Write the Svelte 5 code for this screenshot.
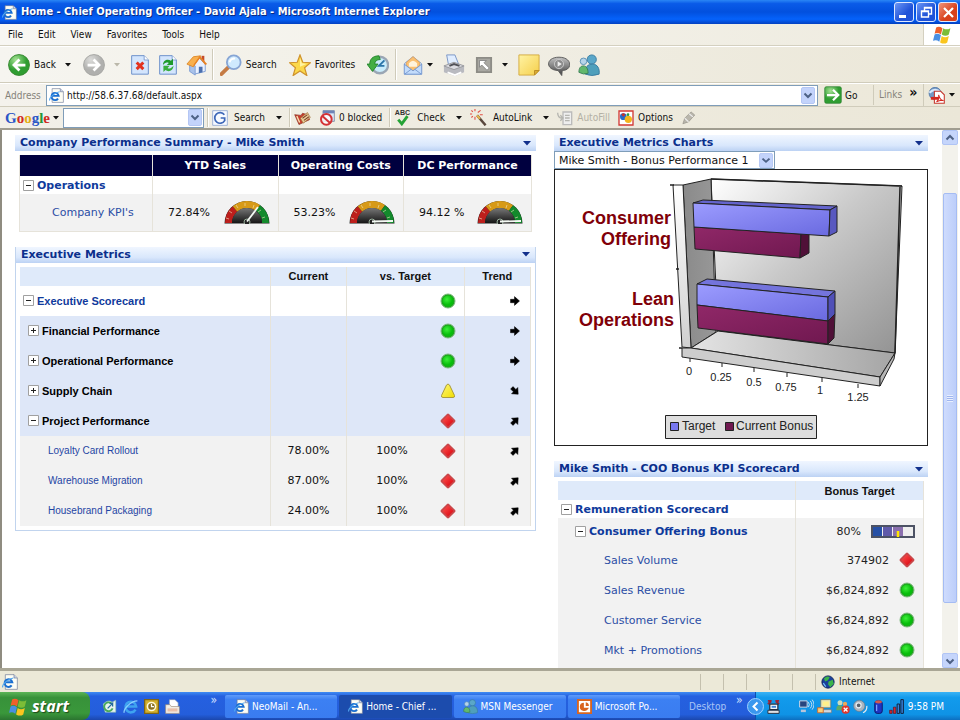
<script>
  const menus = ['File', 'Edit', 'View', 'Favorites', 'Tools', 'Help'];
  const gauges = [
    { label: 'YTD Sales', value: '72.84%', x: 34, y: 7 },
    { label: 'Operating Costs', value: '53.23%', x: 44, y: 21 },
    { label: 'DC Performance', value: '94.12 %', x: 44, y: 21 }
  ];
  const metrics = [
    { name: 'Executive Scorecard', kind: 'root', open: true, status: 'green', trend: 0 },
    { name: 'Financial Performance', kind: 'group', open: false, status: 'green', trend: 0 },
    { name: 'Operational Performance', kind: 'group', open: false, status: 'green', trend: 0 },
    { name: 'Supply Chain', kind: 'group', open: false, status: 'yellow', trend: 45 },
    { name: 'Project Performance', kind: 'group', open: true, status: 'red', trend: -45 },
    { name: 'Loyalty Card Rollout', kind: 'leaf', current: '78.00%', target: '100%', status: 'red', trend: -45 },
    { name: 'Warehouse Migration', kind: 'leaf', current: '87.00%', target: '100%', status: 'red', trend: -45 },
    { name: 'Housebrand Packaging', kind: 'leaf', current: '24.00%', target: '100%', status: 'red', trend: -45 }
  ];
  const bonus = [
    { name: 'Sales Volume', value: '374902', status: 'red' },
    { name: 'Sales Revenue', value: '$6,824,892', status: 'green' },
    { name: 'Customer Service', value: '$6,824,892', status: 'green' },
    { name: 'Mkt + Promotions', value: '$6,824,892', status: 'green' }
  ];
  const ticks = [
    ['0', 690, 358, 689, 375], ['0.25', 722, 363, 721, 381], ['0.5', 754, 368, 754, 386],
    ['0.75', 787, 373, 786, 391], ['1', 822, 378, 820, 394], ['1.25', 858, 384, 858, 401]
  ];
  const tasks = [
    { icon: 'page', name: 'NeoMail - An...' },
    { icon: 'page', name: 'Home - Chief ...', active: true },
    { icon: 'people', name: 'MSN Messenger' },
    { icon: 'ppt', name: 'Microsoft Po...' }
  ];
</script>

{#snippet caret(dim)}
  <svg class="caret" class:dim width="6" height="4" viewBox="0 0 6 4" aria-hidden="true"><path d="M0 0h6L3 3.6z" fill="currentColor" /></svg>
{/snippet}

{#snippet chevron(w, h)}
  <svg class="chev" width={w} height={h} viewBox="0 0 14 17" preserveAspectRatio="none" aria-hidden="true">
    <rect x=".5" y=".5" width="13" height="16" rx="1.5" fill="#c3d3fb" stroke="#b4c6f4" />
    <path d="M3.5 6.5 7 10l3.5-3.5" fill="none" stroke="#4d6185" stroke-width="2" />
  </svg>
{/snippet}

{#snippet icon(name, size)}
  <svg class="icon" width={size} height={size} viewBox="0 0 24 24" aria-hidden="true">
    {#if name === 'page'}
      <path d="M5 1h13l5 5v17H5z" fill="#fdfdf4" stroke="#6d7896" /><path d="M18 1v5h5" fill="#c9d4ea" stroke="#6d7896" />
      <path d="M14.500 17a5.800 5.800 0 1 1 1-4.500H4.500" fill="none" stroke="#1b6fd0" stroke-width="3" />
      <path d="M1 20c-1-4 8-13 16-14" fill="none" stroke="#52a6ee" stroke-width="1.8" />
    {:else if name === 'ie'}
      <path d="M20 17a8.5 8.5 0 1 1 1-5H6" fill="none" stroke="#3fa4f0" stroke-width="4" />
      <path d="M2 22c-2-5 10-19 21-19" fill="none" stroke="#8bd0ff" stroke-width="2" />
    {:else if name === 'back'}
      <circle cx="12" cy="12" r="11.4" fill="url(#gBack)" stroke="#36872f" /><path d="M19 12H7m5.5-6L6.5 12l6 6" fill="none" stroke="#fff" stroke-width="3" />
    {:else if name === 'forward'}
      <circle cx="12" cy="12" r="11.4" fill="url(#gFwd)" stroke="#a5a5a2" /><path d="M5 12h12m-5.500-6 6 6-6 6" fill="none" stroke="#fff" stroke-width="3" />
    {:else if name === 'stop' || name === 'refresh'}
      <path d="M2 .8h15L22 6v17H2z" fill="#d3e5fd" stroke="#6f92cb" stroke-width="1.2" /><path d="M17 .8V6h5" fill="#fff" stroke="#6f92cb" />
      {#if name === 'stop'}
        <path d="m8 9 8 8m0-8-8 8" stroke="#e3321f" stroke-width="3.6" />
      {:else}
        <path d="M6 12c0-6 6-8 9.500-5L18 4.500V12h-7.500L13 9.500c-3-1.500-5 0-7 2.500z" fill="#1e9a2b" /><path d="M18.500 13c0 6-6 8-9.500 5l-2.500 2.500V13H14l-2.500 2.500c3 1.500 5 0 7-2.500z" fill="#38ad3d" />
      {/if}
    {:else if name === 'home'}
      <path d="M17 2h3v7h-3z" fill="#c44c29" /><path d="m4 12 5 10 12-3v-8l-7-7z" fill="#e9f1ff" stroke="#7d9cd2" /><path d="M4 12v7l6 4V13z" fill="#a9c2ea" stroke="#7d9cd2" />
      <path d="M1 11 8 3l8-1-7 10-1 2z" fill="#f9b04d" stroke="#dd8a2c" /><path d="m15 2 8 9-2 1-6-7-6 8-1-1z" fill="#e88324" /><path d="M14 14h4v6l-4 1z" fill="#4a6fae" />
    {:else if name === 'search'}
      <path d="m1.500 22 8-8" stroke="#c57b44" stroke-width="4" stroke-linecap="round" /><circle cx="15" cy="9" r="7.500" fill="#cfeafe" stroke="#87a5d4" stroke-width="2" /><path d="M10.500 9a5 5 0 0 1 6-4" fill="none" stroke="#fff" stroke-width="2" />
    {:else if name === 'star'}
      <path d="m12 1 3 8 8.500.5L17 15l2.500 8.500L12 18.500l-7.500 5L7 15 .5 9.500 9 9z" fill="#fbd84a" stroke="#cf922b" stroke-width="1.300" /><path d="m12 4 2 6 5 .8-7 3z" fill="#fff3a3" />
    {:else if name === 'history'}
      <circle cx="14" cy="12" r="9" fill="#c9ecfb" stroke="#9aa6b4" stroke-width="2.500" /><path d="m19 7-6 6h6" fill="none" stroke="#2c75a9" stroke-width="2" /><path d="M13 2C6 2 3 6 3 11H0l6 8 6-8H8.500c0-3 2-5 6-5z" fill="#43ae43" stroke="#22822a" />
    {:else if name === 'mail'}
      <path d="m2 10 10-8 10 8v13H2z" fill="#d9e9fc" stroke="#7697c9" /><path d="m4 9 8-7 8 7v4l-8 6-8-6z" fill="#fbc070" stroke="#e2a055" /><path d="M7 10q5-6 10 0v4H7z" fill="#fff3dc" /><path d="m1.500 11 10.500 8 10.500-8v12h-21z" fill="#c3dcfb" stroke="#6f93cc" /><path d="m2 23 8-6m12 6-8-6" stroke="#6f93cc" />
    {:else if name === 'print'}
      <path d="m6 12-2-11h9l4 10z" fill="#e0edff" stroke="#7592c4" /><path d="m1 13 11-4 11 4v7l-10 4L1 20z" fill="#b9bac0" /><path d="m1 13 11 4 11-4-11-4z" fill="#dcdce2" stroke="#97989d" /><path d="m5 20 8 3 7-3" stroke="#fff" fill="none" stroke-width="2" /><path d="m7 13 5-2 6 2" stroke="#505157" fill="none" stroke-width="2" />
    {:else if name === 'fit'}
      <path d="M2.500 2.500h19v19h-19z" fill="#a9a8a2" stroke="#8d8c86" stroke-width="2.500" /><path d="M6 6h9l-3 3 7 7-3 3-7-7-3 3z" fill="#fff" stroke="#777" />
    {:else if name === 'note'}
      <path d="M1 1h22v17l-5 5H1z" fill="url(#gNote)" stroke="#d2a93c" /><path d="M23 18h-5v5z" fill="#d9ac35" stroke="#b98a24" />
    {:else if name === 'talk'}
      <path d="M12 3.500c15 0 15 14.500 3.500 14.500L15 23.500 11 18C-3 17.500-3 3.500 12 3.500z" fill="url(#gTalk)" stroke="#555" /><circle cx="12" cy="11" r="5" fill="#8b8b8b" stroke="#ccc" /><path d="M10.500 8v6l4.500-3z" fill="#eee" />
    {:else if name === 'people'}
      <circle cx="15" cy="6" r="5" fill="#5aa7c9" stroke="#387ba0" /><path d="M8 22c-1-8 3-11 8-11s8 5 7 11q-8 3-15 0z" fill="#4f9fbb" stroke="#387ba0" /><circle cx="6" cy="8" r="3.600" fill="#b6d4e9" stroke="#5b8fb3" /><path d="M1 20c0-5 2-7 5-7s5 3 5 8q-5 2-10-1z" fill="#62b86d" stroke="#397f56" />
    {:else if name === 'flag'}
      <path d="M4 3q4-2 8 1l-2 8q-4-3-8-1z" fill="#f0602a" /><path d="M13 4q4 3 9 0l-2 8q-4 3-9 0z" fill="#7cbd37" /><path d="M2 12q4-2 8 1l-2 8q-4-3-8-1z" fill="#4a8fe2" /><path d="M11 14q4 3 9 0l-2 8q-4 3-9 0z" fill="#fac51f" />
    {:else if name === 'go'}
      <rect x="1" y="1" width="22" height="22" rx="2" fill="url(#gBack)" stroke="#2b8030" /><path d="M4 12h14m-6-7 7 7-7 7" fill="none" stroke="#fff" stroke-width="3" />
    {:else if name === 'pdf'}
      <circle cx="10" cy="9" r="8.500" fill="#7398c5" stroke="#446da2" /><path d="M2 8q8-8 16 0" stroke="#d8e9fc" stroke-width="3" fill="none" /><path d="M9 6h9l5 5v12H9z" fill="#fff" stroke="#c5382e" stroke-width="1.500" /><path d="M4 14h11v4H4z" fill="#d5271f" /><path d="M12 21q4-4 3-10 2 8 7 8-5-1-10 2" fill="none" stroke="#d5271f" stroke-width="1.500" />
    {:else if name === 'gsearch'}
      <path d="M1 1h22v22H1z" fill="#f7faff" stroke="#7896cb" /><path d="M18.500 7a8 8 0 1 0 .5 9v-4h-6" fill="none" stroke="#3e68b8" stroke-width="2.600" />
    {:else if name === 'news'}
      <path d="m1 8 6 14 15-7-3-7-7-2-2 3z" fill="#c63a2c" stroke="#8d3a2a" /><path d="m9 13 10-8 4 7-10 8z" fill="#e9cf9a" stroke="#a0703a" /><path d="m12 13 7-5m-5 8 7-5" stroke="#7f3e2a" stroke-width="1.500" /><path d="m4 10 4 9" stroke="#f8e4b4" stroke-width="2" />
    {:else if name === 'block'}
      <path d="M6 1h17v16H6z" fill="#dce8f8" stroke="#586b92" /><path d="M6 1h17v4H6z" fill="#6d83b7" /><circle cx="11" cy="14" r="8" fill="#fff" fill-opacity=".8" stroke="#d33236" stroke-width="3" /><path d="m5 9 12 11" stroke="#d33236" stroke-width="3" />
    {:else if name === 'abc'}
      <text x="12" y="9" text-anchor="middle" font-family="Liberation Sans, sans-serif" font-weight="700" font-size="10" fill="#333">ABC</text><path d="m6 15 5 6 8-11" fill="none" stroke="#24a336" stroke-width="4" />
    {:else if name === 'wand'}
      <path d="m10 9 12 14" stroke="#59473d" stroke-width="3.400" /><path d="m10 9 4 5" stroke="#e7b64f" stroke-width="3" /><path d="M7 0v3m0 8v4M0 7h3m8-2 4-3M2 2l2 2m-2 8 2-2m10-2h4" stroke="#e14d41" stroke-width="1.500" />
    {:else if name === 'fill'}
      <path d="M9 3h13v19H9z" fill="#eee" stroke="#bbb" stroke-width="2" /><path d="M12 8h7m-7 4h7m-7 4h7M1 4q0 8 7 8m-3-4 4 4-4 4" stroke="#b5b5b0" stroke-width="2" fill="none" />
    {:else if name === 'options'}
      <path d="M1.500 1.500h21v21h-21z" fill="#fff" stroke="#d33a35" stroke-width="2" /><circle cx="8" cy="10" r="5" fill="#256cc9" /><circle cx="15.500" cy="14" r="5.500" fill="#f3b51d" /><path d="M5 7q3-4 6 0l-3 3z" fill="#c5322b" /><circle cx="15" cy="7" r="2" fill="#2a9b40" />
    {:else if name === 'pen'}
      <path d="m3 22 3-9L16 3l6 5-10 11z" fill="#b9b6ac" stroke="#8e8b83" /><path d="m6 13 6 6M13 6l6 5" stroke="#eee" stroke-width="2" />
    {:else if name === 'globe'}
      <circle cx="12" cy="12" r="10.500" fill="#1a3f9c" stroke="#0c1e55" stroke-width="1.500" /><path d="M5 6q6-6 10-2l-3 5-5 2zM13 11l7-3 2 7-6 6-4-5z" fill="#3cb44a" /><path d="M4 14l4 6" stroke="#77c8ff" stroke-width="2" />
    {:else if name === 'desktop'}
      <path d="M2 8q8-8 14-3l6-3v19H5z" fill="#e6f4ee" stroke="#8fbfb0" /><path d="M17 15a7 7 0 1 1-2-8" fill="none" stroke="#49a95a" stroke-width="3" /><path d="m9 15 8-8v5m0-5h-5" stroke="#246c9d" stroke-width="2" fill="none" />
    {:else if name === 'clock'}
      <path d="M1 1h22v22H1z" fill="#d3b12e" stroke="#7e6416" stroke-width="2" /><circle cx="12" cy="12" r="6.500" fill="#8a7020" stroke="#fff9d8" stroke-width="2.500" /><path d="M12 8v4h4" stroke="#fff" stroke-width="2" fill="none" />
    {:else if name === 'folder'}
      <path d="M7 1h9l5 5v12H7z" fill="#fff" stroke="#8c97ab" /><path d="M1 9h7l2 3h13v11H1z" fill="#f1ede4" stroke="#9c8877" /><path d="M4 15h16v5H4z" fill="#e9bfa8" />
    {:else if name === 'ppt'}
      <path d="M1.500 1.500h21v21h-21z" fill="#fff" stroke="#d9651f" stroke-width="3" /><path d="M11 6v8h8a8 8 0 0 1-8 5 6.500 6.500 0 0 1 0-13zM14 5a6 6 0 0 1 5 6h-5z" fill="#d9651f" />
    {:else if name === 'modem'}
      <path d="M3 3h6m6 0h6M3 8l5-4m13 4-5-4" stroke="#a02636" stroke-width="3" /><path d="M6 8h13v9H6z" fill="#eef4fa" stroke="#26303f" stroke-width="2" /><path d="M3 18h18v5H3z" fill="#dfe2e6" stroke="#26303f" stroke-width="1.500" /><path d="M9 11h7v3H9z" fill="#3b82d6" />
    {:else if name === 'net'}
      <path d="M1 3h12v10H1z" fill="#27457f" stroke="#d4dceb" stroke-width="1.500" /><path d="M3 17h8v4H3z" fill="#b9c5da" /><path d="M15 5q3 4 0 8m3-10q5 6 0 12m3-14q6 8 0 16" fill="none" stroke="#cfe2f4" stroke-width="1.500" />
    {:else if name === 'monitor'}
      <path d="M6 1h16v13H6z" fill="#e8e4b8" stroke="#6e6b4f" /><path d="M9 4h10v7H9z" fill="#fff08a" /><path d="M9 17h14v5H9z" fill="#cfd6e0" stroke="#777" /><path d="M1 14h9v8H1z" fill="#f7cf7b" stroke="#d06d2e" stroke-width="1.500" />
    {:else if name === 'msnoff'}
      <circle cx="8" cy="6" r="4" fill="#c9dcc0" /><path d="M2 18q0-9 6-8t9 8z" fill="#61a965" /><circle cx="16" cy="8" r="3.500" fill="#e9a95c" /><circle cx="17" cy="17" r="6.500" fill="#e0352c" /><path d="m14 14 6 6m0-6-6 6" stroke="#fff" stroke-width="2" />
    {:else if name === 'speaker'}
      <circle cx="10" cy="11" r="9" fill="#aab4bf" stroke="#6d7885" /><circle cx="9" cy="10" r="4" fill="#56616e" stroke="#e8edf2" stroke-width="2" /><path d="M16 22q7-3 6-11" stroke="#e3e9ef" stroke-width="2" fill="none" />
    {:else if name === 'battery'}
      <rect x="6" y="3" width="12" height="20" rx="4" fill="#1d35c4" stroke="#0d1767" stroke-width="1.500" /><ellipse cx="12" cy="4.500" rx="5.500" ry="2.500" fill="#d0594e" /><path d="M9 9v10" stroke="#7da3ff" stroke-width="2" />
    {:else if name === 'bars'}
      <path d="M1 18h4v5H1zM7 13h4v10H7z" fill="#d6262b" stroke="#4d1020" /><path d="M13 8h4v15h-4zM19 1h4v22h-4z" fill="#3580d8" stroke="#12223d" stroke-width="1.600" />
    {/if}
  </svg>
{/snippet}

{#snippet status(kind)}
  <svg class="status" width="16" height="16" viewBox="0 0 16 16" role="img" aria-label={kind}>
    {#if kind === 'green'}
      <circle cx="8" cy="8" r="7" fill="#1ea41e" stroke="#7cb87c" /><circle cx="8" cy="8" r="5.500" fill="url(#gGreen)" />
    {:else if kind === 'yellow'}
      <path d="M6.500 2q1.500-2 3 0l5 10.500q.5 2-1.500 2H3q-2 0-1.500-2z" fill="url(#gYellow)" stroke="#a99b3e" />
    {:else}
      <path d="M7 .9q1-.7 2 0L15.100 7q.7 1 0 2L9 15.100q-1 .7-2 0L.9 9q-.7-1 0-2z" fill="#c9474a" /><path d="m8 2.500 5.500 5.500L8 13.500 2.500 8z" fill="url(#gRed)" />
    {/if}
  </svg>
{/snippet}

{#snippet gauge(x, y)}
  <svg class="gauge" width="46" height="24" viewBox="0 0 46 24" aria-hidden="true">
    <path d="M.5 23.500a22.500 22.500 0 0 1 45 0z" fill="#1d1d1d" />
    <path d="M4.500 23A18.500 18.500 0 0 1 11 9" fill="none" stroke="#bd1f1c" stroke-width="7" />
    <path d="M11 9a18.500 18.500 0 0 1 23-1" fill="none" stroke="#d79a17" stroke-width="7" />
    <path d="M34 8a18.500 18.500 0 0 1 7.500 15" fill="none" stroke="#138a2c" stroke-width="7" />
    <path d="M8 23a15 15 0 0 1 30 0z" fill="url(#gDial)" />
    <path d="m2 18 3 1m0-8 3 2m4-8 2 3m7-5v3m9-1-1 3m8 2-3 2m7 5-3 1" stroke="#f3e4c0" stroke-width=".6" />
    <circle cx="23" cy="22" r="3" fill="#222" stroke="#9ab09c" /><path d="M23 21.500 {x} {y}" stroke="#f5faf5" stroke-width="1.800" />
  </svg>
{/snippet}

{#snippet toggle(open, name)}
  <button class="toggle" aria-label={(open ? 'Collapse ' : 'Expand ') + name}>
    <svg width="11" height="11" viewBox="0 0 11 11" aria-hidden="true"><path d={open ? 'M3 5.500h5' : 'M3 5.500h5M5.500 3v5'} stroke="#222" /><path d="M.5.5h10v10H.5z" fill="none" stroke="#a0a0a0" /></svg>
  </button>
{/snippet}

{#snippet heading(text)}
  <header class="head"><h2>{text}</h2><button class="drop" aria-label={text + ' menu'}><svg width="8" height="5" viewBox="0 0 8 5"><path d="M0 0h8L4 4.500z" fill="#12308c" /></svg></button></header>
{/snippet}

<svg class="defs" width="0" height="0" aria-hidden="true">
  <defs>
    <radialGradient id="gBack" cx=".35" cy=".25"><stop stop-color="#a4e293" /><stop offset="1" stop-color="#2f9d31" /></radialGradient>
    <radialGradient id="gFwd" cx=".35" cy=".25"><stop stop-color="#dcdcda" /><stop offset="1" stop-color="#b0b0ae" /></radialGradient>
    <linearGradient id="gNote" x2="1" y2="1"><stop stop-color="#fff3a4" /><stop offset="1" stop-color="#f5cf4b" /></linearGradient>
    <linearGradient id="gTalk" x2="0" y2="1"><stop stop-color="#c2c2c2" /><stop offset="1" stop-color="#3f3f3f" /></linearGradient>
    <radialGradient id="gGreen" cx=".4" cy=".35"><stop stop-color="#3ef03a" /><stop offset="1" stop-color="#08bd0c" /></radialGradient>
    <linearGradient id="gYellow" x2="1" y2="1"><stop stop-color="#fff87a" /><stop offset="1" stop-color="#f0dc00" /></linearGradient>
    <linearGradient id="gRed" x2="1" y2="1"><stop stop-color="#ff5450" /><stop offset="1" stop-color="#d8000c" /></linearGradient>
    <linearGradient id="gDial" x2="0" y2="1"><stop stop-color="#777" /><stop offset="1" stop-color="#151515" /></linearGradient>
    <linearGradient id="gWall" x2="1" y2="1"><stop stop-color="#fff" /><stop offset=".45" stop-color="#c9c9c9" /><stop offset="1" stop-color="#929292" /></linearGradient>
    <linearGradient id="gSide" x2="1" y2="0"><stop stop-color="#8a8a8a" /><stop offset="1" stop-color="#989898" /></linearGradient>
    <linearGradient id="gFloor" x2="1" y2="0"><stop stop-color="#e4e4e4" /><stop offset="1" stop-color="#a5a5a5" /></linearGradient>
    <linearGradient id="gStrip" x2="0" y2="1"><stop stop-color="#fff" /><stop offset="1" stop-color="#d0d0d0" /></linearGradient>
    <linearGradient id="gBlue" x2="1" y2="1"><stop stop-color="#9c9cff" /><stop offset="1" stop-color="#6a6ae0" /></linearGradient>
    <linearGradient id="gPlum" x2="1" y2="1"><stop stop-color="#902868" /><stop offset="1" stop-color="#701850" /></linearGradient>
  </defs>
</svg>

<div class="window">
  <div class="titlebar">
    {@render icon('page', 15)}
    <h1>Home - Chief Operating Officer - David Ajala - Microsoft Internet Explorer</h1>
    <button class="wbtn" aria-label="Minimize"><svg width="19" height="19" viewBox="0 0 19 19"><path d="M4 13.500h7" stroke="#fff" stroke-width="3" /></svg></button>
    <button class="wbtn" aria-label="Restore"><svg width="19" height="19" viewBox="0 0 19 19"><path d="M7.500 8V4.500h7V11H12M4.500 8h7v6h-7zM7 5h8M4 8.500h8" fill="none" stroke="#fff" stroke-width="1.400" /></svg></button>
    <button class="wbtn close" aria-label="Close"><svg width="19" height="19" viewBox="0 0 19 19"><path d="m5 5 9 9m0-9-9 9" stroke="#fff" stroke-width="2.200" /></svg></button>
  </div>

  <nav class="menubar">
    {#each menus as m}<button>{m}</button>{/each}
    <span class="flag">{@render icon('flag', 19)}</span>
  </nav>

  <div class="toolbar">
    <button class="tool">{@render icon('back', 22)}Back<span class="wide">{@render caret(false)}</span></button>
    <button class="tool" aria-label="Forward">{@render icon('forward', 22)}<span class="wide">{@render caret(true)}</span></button>
    <button class="tool near" aria-label="Stop">{@render icon('stop', 20)}</button>
    <button class="tool near" aria-label="Refresh">{@render icon('refresh', 20)}</button>
    <button class="tool near" aria-label="Home">{@render icon('home', 22)}</button>
    <i class="sep"></i>
    <button class="tool">{@render icon('search', 22)}Search</button>
    <button class="tool">{@render icon('star', 22)}Favorites</button>
    <button class="tool" aria-label="History">{@render icon('history', 22)}</button>
    <i class="sep"></i>
    <button class="tool" aria-label="Mail">{@render icon('mail', 20)}{@render caret(false)}</button>
    <button class="tool near" aria-label="Print">{@render icon('print', 22)}</button>
    <button class="tool" aria-label="Size">{@render icon('fit', 18)}<span class="wide">{@render caret(false)}</span></button>
    <button class="tool near" aria-label="Note">{@render icon('note', 22)}</button>
    <button class="tool near" aria-label="Discuss">{@render icon('talk', 22)}</button>
    <button class="tool near" aria-label="Messenger">{@render icon('people', 22)}</button>
  </div>

  <div class="address">
    <label for="url">Address</label>
    <div class="urlbox">{@render icon('page', 15)}<input id="url" value="http://58.6.37.68/default.aspx" /><button aria-label="Show addresses">{@render chevron(14, 17)}</button></div>
    <button class="go">{@render icon('go', 18)}Go</button>
    <div class="links">Links<b>»</b></div>
    <button class="pdf" aria-label="Convert">{@render icon('pdf', 17)}{@render caret(false)}</button>
  </div>

  <div class="google">
    <button class="logo"><span><i class="b">G</i><i class="r">o</i><i class="y">o</i><i class="b">g</i><i class="g">l</i><i class="r">e</i></span>{@render caret(false)}</button>
    <div class="gbox"><input aria-label="Google search" /><button aria-label="Search history">{@render chevron(14, 17)}</button></div>
    <i class="sep"></i>
    <button class="gt">{@render icon('gsearch', 16)}Search<span class="wide">{@render caret(false)}</span></button>
    <i class="sep"></i>
    <button class="gt" aria-label="News">{@render icon('news', 17)}</button>
    <button class="gt tight">{@render icon('block', 16)}0 blocked</button>
    <i class="sep"></i>
    <button class="gt">{@render icon('abc', 17)}Check<span class="wide">{@render caret(false)}</span></button>
    <button class="gt">{@render icon('wand', 17)}AutoLink<span class="wide">{@render caret(false)}</span></button>
    <button class="gt tight off">{@render icon('fill', 16)}AutoFill</button>
    <button class="gt tight">{@render icon('options', 16)}Options</button>
    <button class="gt" aria-label="Highlight">{@render icon('pen', 15)}</button>
  </div>

  <div class="view">
    <main>
      <div class="col">
        <section>
          {@render heading('Company Performance Summary - Mike Smith')}
          <table class="kpi">
            <colgroup><col style="width:26%" /><col style="width:24.500%" /><col style="width:24.500%" /><col style="width:25%" /></colgroup>
            <thead><tr><td></td>{#each gauges as g}<th>{g.label}</th>{/each}</tr></thead>
            <tbody>
              <tr class="ops"><td><div class="name">{@render toggle(true, 'Operations')}<a href="#operations">Operations</a></div></td><td></td><td></td><td></td></tr>
              <tr class="vals"><td><a href="#kpis">Company KPI's</a></td>
                {#each gauges as g}<td><div class="pair">{g.value}{@render gauge(g.x, g.y)}</div></td>{/each}
              </tr>
            </tbody>
          </table>
        </section>

        <section class="framed">
          {@render heading('Executive Metrics')}
          <table class="metrics">
            <colgroup><col style="width:49%" /><col style="width:15%" /><col style="width:23%" /><col style="width:13%" /></colgroup>
            <thead><tr><td></td><th>Current</th><th>vs. Target</th><th>Trend</th></tr></thead>
            <tbody>
              {#each metrics as m}
                <tr class={m.kind}>
                  <td><div class="name">{#if m.kind !== 'leaf'}{@render toggle(m.open, m.name)}{/if}<a href="#metric">{m.name}</a></div></td>
                  <td class="num">{m.current ?? ''}</td>
                  <td><div class="pair end"><span>{m.target ?? ''}</span>{@render status(m.status)}</div></td>
                  <td class="trend"><svg width="10" height="10" viewBox="0 0 10 10" role="img" aria-label="trend"><path d="M.5 3.300h4V.6L9.500 5l-5 4.400V6.700h-4z" transform="rotate({m.trend} 5 5)" stroke="#000" stroke-width=".5" /></svg></td>
                </tr>
              {/each}
            </tbody>
          </table>
        </section>
      </div>

      <div class="col">
        <section>
          {@render heading('Executive Metrics Charts')}
          <div class="pick"><select aria-label="Chart"><option>Mike Smith - Bonus Performance 1</option></select><span>{@render chevron(14, 15)}</span></div>
          <div class="chart">
            <svg viewBox="555 170 372 275" role="img" aria-label="Bonus performance chart">
              <g stroke="#222" stroke-width="1" stroke-linejoin="round">
                <path d="M711 179 902 186 895 353 718 331z" fill="url(#gWall)" />
                <path d="M683 185 711 179 716 332 691 348z" fill="url(#gSide)" />
                <path d="M673 185h10l8 163-9-1z" fill="url(#gStrip)" />
                <path d="M691 348 718 331 895 353 880 377z" fill="url(#gFloor)" />
                <path d="M682 348h9l189 29v9L682 357z" fill="#cdcdcd" />
                <path d="M880 377 895 353 894 359 880 386z" fill="#b5b5b5" />
                <path d="M711 179 902 186M900 187l-5 166M670 185h4M676 269h3M679 348h3" fill="none" stroke-width="1.500" />
                <path d="M697 284 707 279 835 291 828 297z" fill="#7474dc" /><path d="M697 284 828 297V321L697 305z" fill="url(#gBlue)" /><path d="M828 297 835 291V314L828 321z" fill="#5050b8" />
                <path d="M697 305 828 321V344L698 328z" fill="url(#gPlum)" /><path d="M828 321 835 314 834 338 828 344z" fill="#501038" />
                <path d="M694 227 801 234 800 258 695 249z" fill="url(#gPlum)" /><path d="M801 234 809 232V253L800 258z" fill="#501038" />
                <path d="M693 203 703 200 837 206 830 210z" fill="#6464cc" /><path d="M693 203 830 210 829 236 694 227z" fill="url(#gBlue)" /><path d="M830 210 837 206V232L829 236z" fill="#5858c0" />
                {#each ticks as [, x, y]}<path d="M{x} {y}v4" />{/each}
              </g>
              <g font-family="Liberation Sans, Arial, sans-serif" fill="#222">
                <g font-size="18" font-weight="700" fill="#800008" text-anchor="end">
                  <text x="671" y="224">Consumer</text><text x="671" y="245">Offering</text>
                  <text x="674" y="305">Lean</text><text x="674" y="326">Operations</text>
                </g>
                <g font-size="11" text-anchor="middle">{#each ticks as [t, , , x, y]}<text {x} {y}>{t}</text>{/each}</g>
                <path d="M665.500 415.500h151v23h-151z" fill="#dedede" stroke="#222" />
                <path d="M670.500 422.500h8v8h-8z" fill="#7878f0" stroke="#222" /><path d="M725.500 422.500h8v8h-8z" fill="#701850" stroke="#222" />
                <g font-size="12"><text x="682" y="430">Target</text><text x="736" y="430">Current Bonus</text></g>
              </g>
            </svg>
          </div>
        </section>

        <section>
          {@render heading('Mike Smith - COO Bonus KPI Scorecard')}
          <table class="bonus">
            <colgroup><col style="width:65%" /><col style="width:35%" /></colgroup>
            <thead><tr><td></td><th>Bonus Target</th></tr></thead>
            <tbody>
              <tr class="rem"><td><div class="name">{@render toggle(true, 'Remuneration Scorecard')}<a href="#rem">Remuneration Scorecard</a></div></td><td></td></tr>
              <tr class="cob"><td><div class="name">{@render toggle(true, 'Consumer Offering Bonus')}<a href="#cob">Consumer Offering Bonus</a></div></td>
                <td><div class="pair right">80%
                  <svg width="44" height="13" viewBox="0 0 44 13" aria-hidden="true"><path d="M1 1h42v11H1z" fill="#eee" stroke="#4c5264" stroke-width="2" /><path d="M2 2h9v9H2z" fill="#2650a6" /><path d="M12 2h9v9h-9z" fill="#5f5aaa" /><path d="M22 2h10v9H22z" fill="#8a6fae" /><path d="M27 6v6" stroke="#ffe600" stroke-width="2.500" /></svg>
                </div></td></tr>
              {#each bonus as b}
                <tr class="item"><td><a href="#item">{b.name}</a></td><td><div class="pair right">{b.value}{@render status(b.status)}</div></td></tr>
              {/each}
              <tr class="cob"><td></td><td></td></tr>
            </tbody>
          </table>
        </section>
      </div>
    </main>
    <div class="scroll">
      <button aria-label="Scroll up"><svg width="14" height="14" viewBox="0 0 14 14"><path d="M3.500 8.500 7 5l3.500 3.500" fill="none" stroke="#4d6185" stroke-width="2" /></svg></button>
      <div class="track"><div class="thumb"><i></i></div></div>
      <button aria-label="Scroll down"><svg width="14" height="14" viewBox="0 0 14 14"><path d="M3.500 5.500 7 9l3.500-3.500" fill="none" stroke="#4d6185" stroke-width="2" /></svg></button>
    </div>
  </div>

  <footer class="statusbar">
    <span class="msg">{@render icon('page', 16)}</span><i></i><i></i><i></i><i></i><i></i>
    <span class="zone">{@render icon('globe', 14)}Internet</span>
  </footer>

  <div class="taskbar">
    <button class="start">{@render icon('flag', 19)}start</button>
    <div class="quick">
      <button aria-label="Show desktop">{@render icon('desktop', 15)}</button><button aria-label="Internet Explorer">{@render icon('ie', 15)}</button><button aria-label="Outlook">{@render icon('clock', 15)}</button><button aria-label="Files">{@render icon('folder', 15)}</button>
      <span>»</span>
    </div>
    <div class="tasks">
      {#each tasks as t}<button class="task" class:active={t.active}>{@render icon(t.icon, 15)}{t.name}</button>{/each}
    </div>
    <div class="desk">Desktop<span>»</span></div>
    <div class="tray">
      <button class="hide" aria-label="Show hidden icons"><svg width="17" height="17" viewBox="0 0 17 17"><circle cx="8.500" cy="8.500" r="8" fill="#3a97ee" stroke="#9fd2ff" /><path d="m10.500 4.500-4 4 4 4" fill="none" stroke="#fff" stroke-width="2" /></svg></button>
      {@render icon('modem', 15)}
      <div class="icons">{#each ['net', 'monitor', 'msnoff', 'speaker', 'battery', 'bars'] as n}{@render icon(n, 15)}{/each}</div>
      <time>9:58 PM</time>
    </div>
  </div>
</div>

<style>
  :global(body) { margin: 0; background: #ece9d8; }
  .window { --ui: 10px "DejaVu Sans Condensed", "DejaVu Sans", sans-serif; height: 100vh; display: flex; flex-direction: column; overflow: hidden; font: var(--ui); color: #111; }
  .window * { box-sizing: border-box; }
  .defs { position: absolute; }
  button, input, select { font: inherit; color: inherit; margin: 0; padding: 0; border: 0; background: none; outline: 0; }
  button { display: flex; align-items: center; white-space: nowrap; }
  a { color: inherit; text-decoration: none; }
  svg { display: block; flex: none; }
  .titlebar { flex: none; height: 24px; display: flex; align-items: center; gap: 2px; padding: 0 2px; background: linear-gradient(#2a86f5, #0a5be8 15%, #0250de 50%, #0562fb 80%, #0340c0); color: #fff; }
  h1 { flex: 1; margin: 0 0 0 2px; font-size: 11px; line-height: 16px; font-weight: 700; text-shadow: 1px 1px #0a2a80; white-space: nowrap; }
  .wbtn { width: 20px; height: 20px; border: 1px solid #dfe9ff; border-radius: 3px; background: linear-gradient(135deg, #6b96f5, #1f52d8 60%); justify-content: center; }
  .wbtn.close { background: linear-gradient(135deg, #f0957c, #d8401a 60%); }
  .menubar { flex: none; height: 22px; display: flex; align-items: center; gap: 15px; padding-left: 8px; background: linear-gradient(90deg, #f8f7f3, #eeebdf); border-bottom: 1px solid #d4d0c0; }
  .flag { margin-left: auto; align-self: stretch; width: 37px; display: grid; place-items: center; background: #fff; border-left: 1px solid #d4d0c0; }
  .toolbar { flex: none; height: 37px; display: flex; align-items: center; gap: 6px; padding-left: 5px; background: linear-gradient(90deg, #f6f5f0, #ebe7d8); border-top: 1px solid #fff; border-bottom: 1px solid #d0ccbb; }
  .tool { gap: 4px; padding: 0 3px; }
  .tool.near { padding: 0 1px; }
  .wide { margin-left: 5px; }
  .caret.dim { color: #bbb8aa; }
  .sep { flex: none; width: 2px; align-self: stretch; margin: 2px -3px; border-left: 1px solid #cfcbba; border-right: 1px solid #fff; }
  .address { flex: none; height: 24px; display: flex; align-items: center; background: linear-gradient(90deg, #f4f2ec, #ece8d9); border-top: 1px solid #fff; border-bottom: 1px solid #d0ccbb; }
  .address label { width: 46px; padding-left: 5px; color: #85837a; }
  .urlbox, .gbox { display: flex; align-items: center; background: #fff; border: 1px solid #7f9db9; }
  .urlbox { flex: 1; height: 21px; padding: 0 2px; gap: 3px; }
  .urlbox input, .gbox input { flex: 1; min-width: 0; }
  .go { width: 55px; gap: 3px; padding-left: 6px; }
  .links { width: 50px; padding-left: 5px; color: #85837a; display: flex; align-items: center; gap: 7px; border-left: 1px solid #cfcbba; line-height: 20px; }
  .links b { color: #111; font-size: 14px; line-height: 14px; align-self: flex-start; }
  .pdf { width: 37px; height: 22px; gap: 4px; padding-left: 4px; border-left: 1px solid #cfcbba; }
  .google { flex: none; height: 23px; display: flex; align-items: center; gap: 4px; padding-left: 5px; background: linear-gradient(90deg, #f2f0e8, #ebe7d8); border-bottom: 2px solid #a09d90; }
  .google .sep { margin: 1px -1px; }
  .logo { gap: 3px; font: 15px/18px "Liberation Serif", serif; }
  .logo i { font-style: normal; font-weight: 700; }
  .b { color: #2a56c6; } .r { color: #cf2a22; } .y { color: #e3ad12; } .g { color: #24963a; }
  .gbox { width: 141px; height: 20px; padding-right: 1px; }
  .gt { gap: 6px; padding-right: 4px; }
  .gt.tight { gap: 4px; }
  .off { color: #b3b0a4; }

  .view { flex: 1; min-height: 0; display: flex; background: #fff; border-left: 2px solid #8f8c80; }
  main { flex: 1; min-width: 0; display: grid; grid-template-columns: minmax(0, 521fr) minmax(0, 374fr); gap: 18px; padding: 5px 14px 0 13px; overflow: hidden; font: 11px "DejaVu Sans", sans-serif; }
  .col { display: flex; flex-direction: column; gap: 15px; min-height: 0; }
  .head { height: 16px; display: flex; align-items: center; justify-content: space-between; padding: 0 5px; background: linear-gradient(#f0f6ff, #d9e7fc 65%, #bcd2f4); }
  h2 { margin: 0; font-size: 11px; line-height: 16px; font-weight: 700; color: #0b2f8c; white-space: nowrap; }
  table { border-collapse: collapse; table-layout: fixed; width: calc(100% - 8px); margin: 4px 4px 0; }
  td, th { padding: 0; border-right: 1px solid #e6e3da; white-space: nowrap; }
  .name { display: flex; align-items: center; gap: 3px; padding-left: 3px; }
  .toggle { background: #fff; }
  .pair { display: flex; align-items: center; justify-content: space-between; padding: 0 8px 0 15px; }
  .kpi { border-left: 1px solid #e6e3da; border-bottom: 1px solid #e6e3da; }
  .kpi thead { background: #00003f; color: #fff; }
  .kpi thead tr { height: 21px; }
  .ops { height: 18px; color: #0f3a9c; font-weight: 700; }
  .vals { height: 37px; background: #f2f2f2; }
  .vals a { padding-left: 32px; color: #2b4ea5; }
  .framed { border: 1px solid #c1d4ee; border-top: 0; padding-bottom: 4px; }
  .metrics thead, .bonus thead { background: #dfeafa; }
  .metrics thead tr { height: 19px; }
  .metrics th, .bonus th, .root, .group { font: bold 11px "Liberation Sans", Arial, sans-serif; }
  .metrics tbody tr { height: 30px; }
  .root { color: #0f3a9c; }
  .group { background: #dee7f8; color: #000; }
  .group .name { padding-left: 8px; gap: 3px; }
  .leaf, .item, .cob { background: #f2f2f2; }
  .leaf .name { font: 10px "Liberation Sans", Arial, sans-serif; color: #1f45a4; padding-left: 28px; }
  .num { text-align: center; }
  .pair.end { padding: 0 8px 0 29px; }
  .trend svg { margin-left: auto; margin-right: 10px; }
  .pick { position: relative; width: 59%; height: 18px; }
  .pick select { appearance: none; width: 100%; height: 18px; padding-left: 4px; border: 1px solid #7f9db9; background: #fff; font-size: 11px; }
  .pick span { position: absolute; right: 2px; top: 2px; pointer-events: none; }
  .chart { border: 1px solid #222; }
  .chart svg { width: 100%; height: auto; }
  .bonus thead tr { height: 19px; }
  .rem { height: 18px; }
  .cob { height: 27px; }
  .rem, .cob { color: #0f3a9c; }
  .rem a, .cob a { font-weight: 700; }
  .cob .name { padding-left: 17px; }
  .item { height: 30px; }
  .item a { padding-left: 46px; color: #2b4ea5; }
  .pair.right { justify-content: flex-end; gap: 10px; padding: 0 8px; color: #222; }

  .scroll { flex: none; width: 16px; margin-right: 2px; display: flex; flex-direction: column; background: #f3f2ec; }
  .scroll button { height: 15px; justify-content: center; background: #c5d5fb; border: 1px solid #b0c4f5; border-radius: 2px; }
  .track { flex: 1; display: grid; grid-template-rows: 48fr 410fr 50fr; }
  .thumb { grid-row: 2; margin: 0 1px; border: 1px solid #a5bcf3; border-radius: 2px; background: linear-gradient(90deg, #cfdcfd, #bccefa); display: grid; place-items: center; }
  .thumb i { width: 6px; height: 7px; background: repeating-linear-gradient(#e8effe 0 1px, #9fb5ee 1px 2px); }
  .statusbar { flex: none; height: 24px; display: flex; align-items: center; background: #ece9d8; border-top: 3px solid #a9a695; }
  .msg { flex: 1; padding-left: 2px; }
  .statusbar i { width: 23px; height: 16px; border-left: 1px solid #c4c0ae; }
  .zone { width: 145px; height: 16px; display: flex; align-items: center; gap: 4px; padding-left: 5px; border-left: 1px solid #c4c0ae; }
  .taskbar { flex: none; height: 28px; display: flex; align-items: stretch; background: linear-gradient(#3f8cf3, #2560e0 15%, #245edb 80%, #1b47ad); color: #fff; }
  .start { width: 90px; padding-left: 9px; gap: 4px; color: #fff; font: italic bold 16px "Noto Sans", sans-serif; text-shadow: 1px 1px 1px #1d4a1a; border-radius: 0 8px 8px 0; background: linear-gradient(#5cb557, #37913a 20%, #3a983b 75%, #2b7430); }
  .quick { width: 135px; display: flex; align-items: center; gap: 6px; padding-left: 12px; }
  .quick span { margin: 0 8px 0 auto; align-self: flex-start; font-size: 12px; line-height: 16px; color: #cfe0ff; }
  .tasks { flex: 1; min-width: 0; display: grid; grid-template-columns: repeat(4, minmax(0, 1fr)); gap: 2px; padding: 3px 0 2px; }
  .task { gap: 3px; padding-left: 9px; color: #fff; border-radius: 2px; background: linear-gradient(#5f9bfa, #3c80f3 20%, #3a7cf0); }
  .task.active { background: #1c4cad; }
  .desk { width: 75px; padding-left: 9px; display: flex; align-items: center; gap: 10px; color: #a9c4f6; }
  .desk span { align-self: flex-start; font-size: 12px; line-height: 16px; color: #cfe0ff; }
  .tray { width: 205px; display: flex; align-items: center; background: linear-gradient(#3ab3f5, #129bec 20%, #0f93e6 80%, #0d6fc0); border-left: 1px solid #0c4fae; }
  .hide { margin: 0 2px 0 -9px; }
  .icons { display: flex; gap: 3px; margin-left: 18px; }
  time { margin-left: auto; padding-right: 16px; }
</style>
